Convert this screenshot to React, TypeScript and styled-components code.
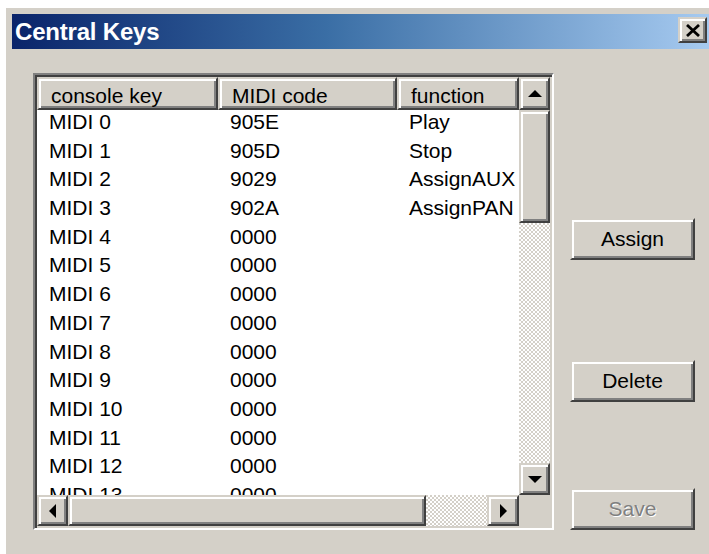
import React from "react";
import styled, { createGlobalStyle, css } from "styled-components";

const face = "#d4d0c8";
const shadow = "#808080";
const darkShadow = "#404040";
const highlight = "#ffffff";

const GlobalStyle = createGlobalStyle`
  html, body {
    margin: 0;
    background: #ffffff;
  }
  body {
    font-family: "Liberation Sans", Arial, sans-serif;
    color: #000;
  }
`;

// classic 3d bevel, doubled up for the large dialog scale
const raised = css`
  box-sizing: border-box;
  border: 2px solid;
  border-color: ${face} ${darkShadow} ${darkShadow} ${face};
  box-shadow: inset 2px 2px ${highlight}, inset -2px -2px ${shadow};
  background: ${face};
`;

const hatch = css`
  background: repeating-conic-gradient(#ffffff 0 25%, ${face} 0 50%) 0 0 / 4px 4px;
`;

type KeyRow = { key: string; code: string; fn: string };

const keys: KeyRow[] = [
  { key: "MIDI 0", code: "905E", fn: "Play" },
  { key: "MIDI 1", code: "905D", fn: "Stop" },
  { key: "MIDI 2", code: "9029", fn: "AssignAUX" },
  { key: "MIDI 3", code: "902A", fn: "AssignPAN" },
  ...Array.from({ length: 10 }, (_, i) => ({
    key: `MIDI ${i + 4}`,
    code: "0000",
    fn: "",
  })),
];

const columns = ["console key", "MIDI code", "function"];

const Page = styled.div`
  padding: 8px 0 0 6px;
`;

const Window = styled.div`
  width: 703px;
  height: 546px;
  box-sizing: border-box;
  padding: 6px 0 0 6px;
  background: ${face};
  overflow: hidden;
`;

const TitleBar = styled.div`
  height: 35px;
  display: flex;
  align-items: flex-start;
  justify-content: space-between;
  padding: 0 2px 0 3px;
  background: linear-gradient(90deg, #0a246a 0%, #3a6ea5 45%, #a6caf0 100%);
`;

const Title = styled.span`
  color: #ffffff;
  font-weight: bold;
  font-size: 24px;
  line-height: 35px;
  letter-spacing: -0.2px;
`;

const CloseButton = styled.div`
  ${raised}
  margin-top: 3px;
  width: 29px;
  height: 26px;
  display: flex;
  align-items: center;
  justify-content: center;
`;

const Body = styled.div`
  display: flex;
  align-items: flex-start;
  margin-top: 24px;
  padding-left: 21px;
`;

const ListView = styled.div`
  width: 521px;
  height: 457px;
  box-sizing: border-box;
  padding: 2px;
  border: 2px solid;
  border-color: ${shadow} ${highlight} ${highlight} ${shadow};
  box-shadow: inset 2px 2px ${darkShadow}, inset -2px -2px ${face};
  background: #ffffff;
  display: grid;
  grid-template-columns: 1fr 31px;
  grid-template-rows: 1fr 31px;
`;

const Content = styled.div`
  overflow: hidden;
  display: flex;
  flex-direction: column;
`;

const HeaderRow = styled.div`
  flex: none;
  display: grid;
  grid-template-columns: 181px 179px 1fr;
`;

const HeaderCell = styled.div`
  ${raised}
  height: 33px;
  padding: 6px 0 0 12px;
  font-size: 21px;
  line-height: 22px;
  white-space: nowrap;
  overflow: hidden;
`;

const Row = styled.div`
  flex: none;
  height: 28.7px;
  display: grid;
  grid-template-columns: 181px 179px 1fr;
  font-size: 21px;
  line-height: 22px;
`;

const Cell = styled.div`
  padding: 1px 0 0 12px;
  white-space: nowrap;
  overflow: hidden;
`;

const VScroll = styled.div`
  display: flex;
  flex-direction: column;
`;

const HScroll = styled.div`
  display: flex;
`;

const ScrollButton = styled.div<{ $len: number }>`
  ${raised}
  flex: 0 0 ${(p) => p.$len}px;
  display: flex;
  align-items: center;
  justify-content: center;
`;

const Thumb = styled.div<{ $len: number }>`
  ${raised}
  flex: 0 0 ${(p) => p.$len}px;
`;

const Track = styled.div`
  flex: 1;
  ${hatch}
`;

const Corner = styled.div`
  background: ${face};
`;

const ButtonColumn = styled.div`
  display: flex;
  flex-direction: column;
  margin-left: 16px;
`;

const PushButton = styled.button<{ $top: number }>`
  ${raised}
  margin-top: ${(p) => p.$top}px;
  width: 125px;
  height: 42px;
  padding: 0;
  font-family: inherit;
  font-size: 21px;
  line-height: 22px;
  color: #000;

  &:disabled {
    color: ${shadow};
    text-shadow: 1px 1px ${highlight};
  }
`;

type Dir = "up" | "down" | "left" | "right";

const arrowPoints: Record<Dir, string> = {
  up: "0,7 7,0 14,7",
  down: "0,0 14,0 7,7",
  left: "7,0 7,14 0,7",
  right: "0,0 0,14 7,7",
};

const Arrow = ({ dir }: { dir: Dir }) => {
  const flat = dir === "up" || dir === "down";
  return (
    <svg width={flat ? 14 : 7} height={flat ? 7 : 14}>
      <polygon points={arrowPoints[dir]} fill="#000" />
    </svg>
  );
};

const CloseGlyph = () => (
  <svg width="16" height="13" viewBox="0 0 16 13">
    <path d="M2 1 L14 12 M14 1 L2 12" stroke="#000" strokeWidth="2.8" />
  </svg>
);

export default function App() {
  return (
    <>
      <GlobalStyle />
      <Page>
        <Window>
          <TitleBar>
            <Title>Central Keys</Title>
            <CloseButton>
              <CloseGlyph />
            </CloseButton>
          </TitleBar>
          <Body>
            <ListView>
              <Content>
                <HeaderRow>
                  {columns.map((c) => (
                    <HeaderCell key={c}>{c}</HeaderCell>
                  ))}
                </HeaderRow>
                {keys.map((k) => (
                  <Row key={k.key}>
                    <Cell>{k.key}</Cell>
                    <Cell>{k.code}</Cell>
                    <Cell>{k.fn}</Cell>
                  </Row>
                ))}
              </Content>
              <VScroll>
                <ScrollButton $len={33}>
                  <Arrow dir="up" />
                </ScrollButton>
                <Thumb $len={113} />
                <Track />
                <ScrollButton $len={32}>
                  <Arrow dir="down" />
                </ScrollButton>
              </VScroll>
              <HScroll>
                <ScrollButton $len={31}>
                  <Arrow dir="left" />
                </ScrollButton>
                <Thumb $len={358} />
                <Track />
                <ScrollButton $len={32}>
                  <Arrow dir="right" />
                </ScrollButton>
              </HScroll>
              <Corner />
            </ListView>
            <ButtonColumn>
              <PushButton $top={145}>Assign</PushButton>
              <PushButton $top={100}>Delete</PushButton>
              <PushButton $top={86} disabled>
                Save
              </PushButton>
            </ButtonColumn>
          </Body>
        </Window>
      </Page>
    </>
  );
}
